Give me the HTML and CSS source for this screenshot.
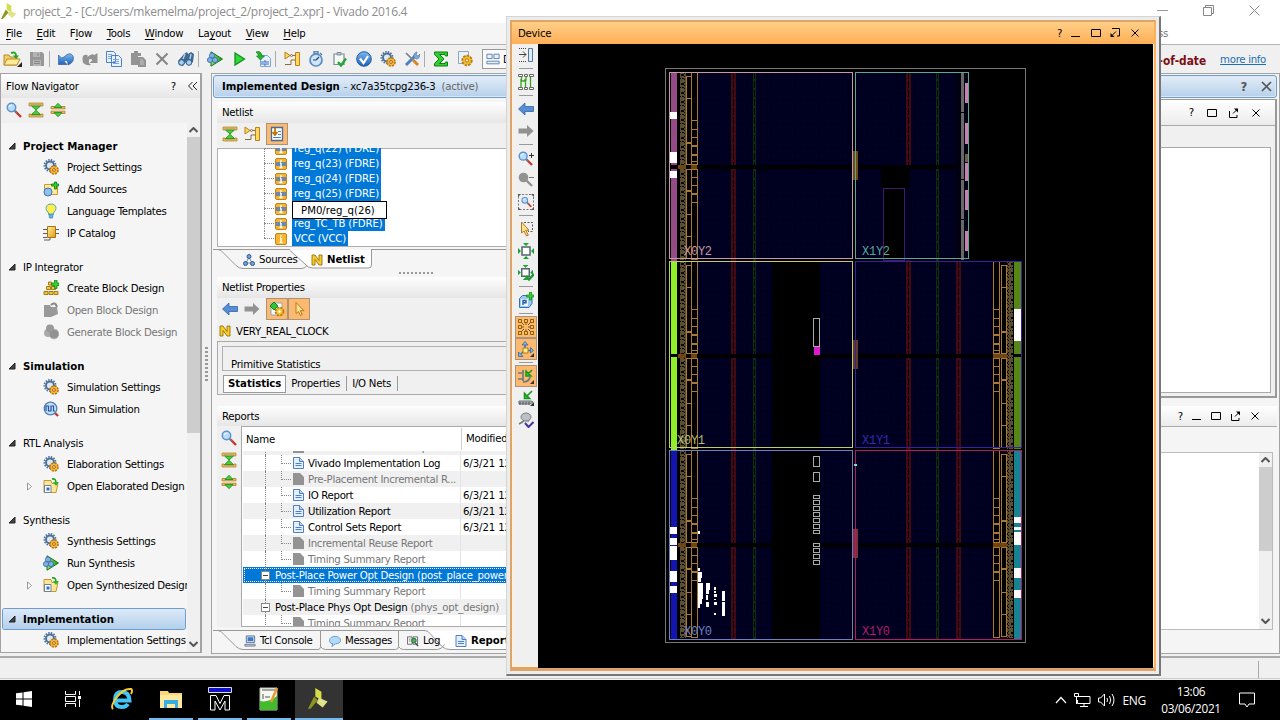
FILE: index.html
```html
<!DOCTYPE html>
<html lang="en">
<head>
<meta charset="utf-8">
<title>project_2 - Vivado 2016.4</title>
<link rel="stylesheet" href="styles.css">
</head>
<body>
<svg class="defs" width="0" height="0">
<defs>
<linearGradient id="gold" x1="0" y1="0" x2="1" y2="1"><stop offset="0" stop-color="#fff0a0"/><stop offset="1" stop-color="#e09a10"/></linearGradient>
<linearGradient id="blu" x1="0" y1="0" x2="0" y2="1"><stop offset="0" stop-color="#7db8ee"/><stop offset="1" stop-color="#1c5fb8"/></linearGradient>
<linearGradient id="grn" x1="0" y1="0" x2="1" y2="0"><stop offset="0" stop-color="#8ee36a"/><stop offset="1" stop-color="#12a012"/></linearGradient>
<symbol id="gears" viewBox="0 0 16 16"><circle cx="7" cy="6.500" r="5.700" fill="none" stroke="#4d6f95" stroke-width="1.600" stroke-dasharray="1.500 1.200"/><circle cx="7" cy="6.500" r="4" fill="#dce8f4" stroke="#4d6f95" stroke-width="1.900"/><circle cx="11" cy="11" r="4.100" fill="#f5b73a" stroke="#b87414" stroke-width="1.500" stroke-dasharray="2.200 1"/><circle cx="11" cy="11" r="1.400" fill="#fff4c8" stroke="#a8620a"/></symbol>
<symbol id="mag" viewBox="0 0 16 16"><path d="M9 9l6 6" stroke="#c8372e" stroke-width="2.400"/><path d="M8 8l3 3" stroke="#707a86" stroke-width="1.500"/><circle cx="5.500" cy="5.500" r="4.200" fill="#b9dcfa" stroke="#5c92ca" stroke-width="1.500"/><path d="M3 5q1-2 3-2" stroke="#fff" fill="none"/></symbol>
<symbol id="collapse" viewBox="0 0 16 16"><path d="M1 4V1h14v3h-2V3H3v1zM1 12v3h14v-3h-2v1H3v-1z" fill="#e9bd62" stroke="#b07c24" stroke-width=".7"/><path d="M3.500 4h9L8 8zM3.500 12.500h9L8 8.300z" fill="#4ecb36" stroke="#178a18" stroke-width=".8"/></symbol>
<symbol id="expand" viewBox="0 0 16 16"><path d="M1 6.800V4.500h14v2.300zM1 11.500V9.200h14v2.300z" fill="#e9bd62" stroke="#b07c24" stroke-width=".8"/><path d="M4 5.500h8L8 1.300zM4 10.500h8L8 14.700z" fill="#4ecb36" stroke="#178a18" stroke-width=".8"/></symbol>
<symbol id="addsrc" viewBox="0 0 16 16"><path d="M1.500 3.500h13v10h-13z" fill="#ffe9a0" stroke="#cc9a2c"/><circle cx="5" cy="11" r="4" fill="#92c1ee" stroke="#3a77b6"/><path d="M10 2h3v-2h2v2h2v2h-2v3h-2V4h-3z" transform="translate(-1.500 1)" fill="#38d038" stroke="#0b8a0b" stroke-width=".9"/></symbol>
<symbol id="bulb" viewBox="0 0 16 16"><path d="M8 1c-6 0-6 6-3 8l1 3h4l1-3c3-2 3-8-3-8z" fill="#ffee48" stroke="#52a5c8"/><path d="M6 11h4l-.5 4h-3z" fill="#6cb4e0" stroke="#2c7fae" stroke-width=".7"/></symbol>
<symbol id="ip" viewBox="0 0 16 16"><path d="M0 4.500h4M0 8.500h4M0 12.500h4M12 4.500h4M12 8.500h4M1 15h6v-2" stroke="#555e70" fill="none"/><path d="M4.500 1.500h8v11h-8z" fill="url(#gold)" stroke="#a9740c"/></symbol>
<symbol id="blocks" viewBox="0 0 16 16"><path d="M1 11.500h4v3H1zM6 11.500h4v3H6zM11 11.500h4v3h-4zM3.500 6.500h4v3h-4zM8.500 6.500h4v3h-4zM5.500 2h3v3h-3z" fill="#f2c63e" stroke="#a87a14"/><path d="M8.500 3h3V0h2.500v3h2v2.500h-2v3h-2.500v-3h-3z" fill="#38d038" stroke="#0b8a0b" stroke-width=".8"/></symbol>
<symbol id="openg" viewBox="0 0 16 16"><path d="M1 3h6l1 2h6l1 7-7 3H1z" fill="#999"/><path d="M8 3q4-4 6 2" stroke="#888" stroke-width="2" fill="none"/></symbol>
<symbol id="geng" viewBox="0 0 16 16"><circle cx="5" cy="9" r="4" fill="#aaa"/><circle cx="7" cy="4.500" r="4" fill="#999"/><circle cx="11" cy="10" r="4.800" fill="#929292" stroke="#aaa" stroke-width="1" stroke-dasharray="2 1"/></symbol>
<symbol id="sim" viewBox="0 0 16 16"><path d="M11 11l4 4" stroke="#c8372e" stroke-width="2.400"/><circle cx="7.500" cy="7.500" r="6.300" fill="#c5e0f8" stroke="#4f80b4" stroke-width="1.300"/><path d="M3 10V5h2.500v5H8V5h2.500v5H12" stroke="#2451a2" fill="none" stroke-width="1.200"/></symbol>
<symbol id="opend" viewBox="0 0 16 16"><path d="M1 2.500h7l1 3h6l-2 9H1z" fill="#ffe697" stroke="#c39734"/><path d="M1.500 7.500h6.500v7H1.500z" fill="#fff" stroke="#6682a5"/><path d="M3.500 9.500h3v3h-3z" fill="#386ac0"/><path d="M9 1q4-1 4 4" stroke="#18a118" stroke-width="1.600" fill="none"/><path d="M10 4h5.800L13 8z" fill="#28b728"/></symbol>
<symbol id="runs" viewBox="0 0 16 16"><path d="M4 .8L15.500 8 4 15.200z" fill="url(#grn)" stroke="#18761e"/><circle cx="5" cy="4.500" r="2.600" fill="#7fb0e4" stroke="#346aa6" stroke-width=".8"/><circle cx="3" cy="9" r="2.600" fill="#7fb0e4" stroke="#346aa6" stroke-width=".8"/><circle cx="8" cy="9" r="2.600" fill="#7fb0e4" stroke="#346aa6" stroke-width=".8"/></symbol>
<symbol id="play" viewBox="0 0 16 16"><path d="M4 2l9.500 6L4 14z" fill="#30d83a" stroke="#0d9318" stroke-width="1.300"/></symbol>
<symbol id="folder" viewBox="0 0 20 16"><path d="M1 14V4h5l1 2h7v8z" fill="#f4ce68" stroke="#b78c2a"/><path d="M1 14l3-6h13l-3 6z" fill="#ffe998" stroke="#b78c2a"/><path d="M8 2q5-2 5 3" stroke="#22a824" stroke-width="2" fill="none"/><path d="M10 4.500h6L13 8z" fill="#22a824"/><path d="M19 11v5h-5z" fill="#222"/></symbol>
<symbol id="save" viewBox="0 0 16 16"><path d="M1 1h12l2 2v12H1z" fill="#979797"/><path d="M4 1h7v5H4zM4 9h8v6H4z" fill="#b4b4b4"/><path d="M5 10.500h6M5 12.500h6M9 2v3" stroke="#888"/></symbol>
<symbol id="undo" viewBox="0 0 16 16"><path d="M.5 4v9.500H9L6.200 10.500Q10 7 10 14q7-3 5-9-3-5-9 1L3.500 7z" fill="url(#blu)" stroke="#2a5f9f" stroke-width=".7"/></symbol>
<symbol id="redo" viewBox="0 0 16 16"><path d="M15.500 2v10H7.500L10.500 9Q6 6 7 12l2 2q-9 1-8.500-6 0-5 5-4v2q4-4 7-2z" fill="#929292"/></symbol>
<symbol id="copy" viewBox="0 0 16 16"><path d="M.5.500h7l2 2v9h-9zM5.500 4.500h7l3 3v8h-10z" fill="#e8f3ff" stroke="#4d7fca"/><path d="M2 3.500h4M2 5.500h3M2 7.500h3M7 8.500h6M7 10.500h6M7 12.500h6" stroke="#79a5df"/></symbol>
<symbol id="paste" viewBox="0 0 16 16"><path d="M1 2h3V0h4v2h3v3H8v9H1zM8 6h5l3 3v7H8z" fill="#949494"/><path d="M10 9h3M10 11h4M10 13h4" stroke="#c4c4c4"/></symbol>
<symbol id="del" viewBox="0 0 16 16"><path d="M2.500 2.500l11 11M13.500 2.500l-11 11" stroke="#858585" stroke-width="2"/></symbol>
<symbol id="bino" viewBox="0 0 16 16"><path d="M6 3l3-2 1 2 3-2 3 2-1 8-4 3-3-3-3 4-4-1-1-4z" fill="#3f6790"/><circle cx="3.500" cy="11.500" r="2.800" fill="#a8d0f0" stroke="#315b88"/><circle cx="11" cy="11.500" r="2.800" fill="#a8d0f0" stroke="#315b88"/><path d="M7 3l-2 5M13 3l-1 5" stroke="#b8d0e6" stroke-width="1.400"/></symbol>
<symbol id="bits" viewBox="0 0 16 16"><path d="M5.500 4.500h7l3 3v8h-10z" fill="#e7f2fe" stroke="#7da5d4"/><path d="M7 10v4M9 10h2v4H9zM13 10v4" stroke="#3a6abd" fill="none"/><path d="M1 1q5-2 6 4h2.500L5.500 9 1.500 5h2q0-2-2.500-4z" fill="#22b62b" stroke="#107d18" stroke-width=".7"/></symbol>
<symbol id="schem" viewBox="0 0 16 16"><path d="M1 1l5 3.500L1 8zM11.500 1.500h4v13h-4z" fill="#ffd75e" stroke="#b7821c"/><path d="M6 4.500h5M1 13.500h6V9h4" stroke="#8a6a3a" fill="none"/><circle cx="7.500" cy="4.500" r="1" fill="#fff" stroke="#8a6a3a"/></symbol>
<symbol id="timer" viewBox="0 0 16 16"><path d="M6 0h4v3H6zM12 2l2 2" stroke="#557ca6" stroke-width="1.300" fill="#a9c5e4"/><circle cx="8" cy="9" r="6" fill="#cfe5fb" stroke="#5a8ac0" stroke-width="1.700"/><path d="M8 9l3-3M8 9H5" stroke="#26486e" stroke-width="1.200"/></symbol>
<symbol id="clip" viewBox="0 0 16 16"><path d="M2 3h10v10.500H2z" fill="#f4f9f4" stroke="#7d8d94" stroke-width="1.200"/><path d="M5 1.500h4v2.500H5z" fill="#bac9d4" stroke="#7d8d94"/><path d="M6 11l3 3.500 5-7" stroke="#20a635" stroke-width="2.400" fill="none"/></symbol>
<symbol id="okc" viewBox="0 0 16 16"><circle cx="8" cy="8" r="7.300" fill="url(#blu)" stroke="#205da8"/><path d="M4 7.500L7.500 12 12 5" stroke="#fff" stroke-width="2.200" fill="none"/></symbol>
<symbol id="tools" viewBox="0 0 16 16"><path d="M2 14l9-9" stroke="#4b82bd" stroke-width="3"/><path d="M10 6q-1-4 3-5l-1 3 2 1 2-2q0 5-4 5z" fill="#7facdd" stroke="#3a6ca8" stroke-width=".6"/><path d="M2 2l7 7" stroke="#75828f" stroke-width="1.700"/><path d="M9 9l5 5" stroke="#d8842c" stroke-width="3"/></symbol>
<symbol id="sigma" viewBox="0 0 16 16"><path d="M1.500 1h13v4h-2L12 3.500H6.500L11 8l-4.500 4.500H12l.5-1.500h2v4h-13v-2.500L6 8 1.500 3.500z" fill="#2fd02f" stroke="#0c7e12"/></symbol>
<symbol id="fgear" viewBox="0 0 16 16"><path d="M1.500.500h10v12h-10z" fill="#eaf2fb" stroke="#91a5bd"/><circle cx="10" cy="9.500" r="4.800" fill="#f5bd32" stroke="#bb7c12" stroke-width="1.800" stroke-dasharray="2.600 1"/><circle cx="10" cy="9.500" r="1.700" fill="#fff2b8" stroke="#b3740d"/></symbol>
<symbol id="layout" viewBox="0 0 16 16"><path d="M1 2.500h6v5H1zM9 2.500h6v5H9zM1 10.500h14v3H1z" fill="#e8f1fb" stroke="#5479ab"/></symbol>
<symbol id="netlistbtn" viewBox="0 0 16 16"><path d="M2.500 1.500h11v13h-11z" fill="#fff" stroke="#426da4" stroke-width="1.300"/><path d="M9 5.500h3M9 8.500h3M4 11.500h8" stroke="#4b80bf"/><path d="M6 2v6M3.500 6L6 9l2.500-3" stroke="#bc7600" stroke-width="1.800" fill="none"/></symbol>
<symbol id="cell" viewBox="0 0 12 12"><rect x=".5" y=".5" width="11" height="11" rx="1.500" fill="#f8b62f" stroke="#c3811a"/><path d="M1 4h10v4H1z" fill="#6d87ab"/><path d="M6 2v2M6 5v4.500M4.500 9.500h3M5 5h1" stroke="#fff" stroke-width="1.400"/></symbol>
<symbol id="celli" viewBox="0 0 12 12"><rect x=".5" y=".5" width="11" height="11" rx="1.500" fill="#f8b62f" stroke="#c3811a"/><path d="M6 2v1.500M6 5v4.500M4.500 9.500h3M5 5h1" stroke="#fff" stroke-width="1.400"/></symbol>
<symbol id="src" viewBox="0 0 12 12"><path d="M6 3L3 9h6z" fill="none" stroke="#888"/><circle cx="6" cy="2.500" r="2" fill="#6ba3df" stroke="#285b98"/><circle cx="2.500" cy="9.500" r="2" fill="#6ba3df" stroke="#285b98"/><circle cx="9.500" cy="9.500" r="2" fill="#6ba3df" stroke="#285b98"/></symbol>
<symbol id="nn" viewBox="0 0 12 12"><path d="M1 11V1h3l4 5.500V1h3v10H8L4 5.500V11z" fill="#f4ca2c" stroke="#98720c" stroke-width=".9"/></symbol>
<symbol id="larr" viewBox="0 0 16 16"><path d="M.5 8L7 2v3.500h8.500v5H7V14z" fill="#568ed4" stroke="#3464a4" stroke-width=".8"/></symbol>
<symbol id="rarr" viewBox="0 0 16 16"><path d="M15.500 8L9 2v3.500H.5v5H9V14z" fill="#929292"/></symbol>
<symbol id="pgear" viewBox="0 0 16 16"><path d="M2 2h11v12H2z" fill="#f7fbff" stroke="#91a5bd"/><path d="M1 5l4-4 4 4-4 4z" fill="#2dc43a" stroke="#118421"/><circle cx="10.500" cy="10.500" r="4" fill="#f5c332" stroke="#b97c12" stroke-width="1.700" stroke-dasharray="2.200 1"/><circle cx="10.500" cy="10.500" r="1.200" fill="#fff"/></symbol>
<symbol id="cur" viewBox="0 0 16 16"><path d="M5 1.500v11l2.500-2 2 4 1.800-.8-2-4H13z" fill="#ffe08a" stroke="#b27a22"/></symbol>
<symbol id="doc" viewBox="0 0 11 12"><path d="M.5.500h6l4 4v7H.5z" fill="#e4f0fd" stroke="#4f7fc4"/><path d="M6.500.500v4h4" fill="#b6d2f1" stroke="#4f7fc4"/><path d="M2.500 6.500h6M2.500 8.500h6" stroke="#4f7fc4"/></symbol>
<symbol id="docg" viewBox="0 0 11 12"><path d="M0 0h7l4 4v8H0z" fill="#939393"/></symbol>
<symbol id="con" viewBox="0 0 13 12"><path d="M2.500.500h9v7h-9z" fill="#c7dff6" stroke="#5b7190"/><path d="M4 2h6v4H4z" fill="#3d78c4"/><path d="M1 9.500h11v2H1z" fill="#d5dbe3" stroke="#65758a"/></symbol>
<symbol id="msg" viewBox="0 0 13 12"><path d="M6.500 1C-1 1-1 9 4 9l-1 3 4-3c8 0 7-8-.5-8z" fill="#b2d8fa" stroke="#6096cd"/></symbol>
<symbol id="log" viewBox="0 0 13 12"><path d="M.5 1.500h5v8h-5zM6.500 1.500h5v8h-5z" fill="#f3f6fa" stroke="#5c6a7a"/><path d="M2 4h2M2 6h2M8 4h2" stroke="#d46a55"/><circle cx="7.500" cy="5.500" r="2.500" fill="#4ab05b" stroke="#276b34"/><path d="M9 8l3 3.500" stroke="#444" stroke-width="1.500"/></symbol>
<symbol id="dock" viewBox="0 0 16 16"><path d="M1 1.500h8M1 14.500h8" stroke="#444" stroke-dasharray="1 1"/><path d="M1 7.500h7M5 4.500l3 3-3 3" stroke="#444" fill="none"/><path d="M10.500 1.500h4v13h-4z" fill="#dcecfb" stroke="#54779c"/></symbol>
<symbol id="route" viewBox="0 0 16 16"><path d="M3.500 3v4h4v7M3 5v8M8 3v3h-2M12.500 3v11" stroke="#35a51c" stroke-width="1.300" fill="none"/><path d="M.5.500h4v2h-4zM6.500.500h3v2h-3zM11.500.500h4v2h-4zM.5 13.500h4v2h-4zM6.500 13.500h3v2h-3zM11.500 13.500h4v2h-4z" fill="#fff" stroke="#666"/></symbol>
<symbol id="zin" viewBox="0 0 16 16"><use href="#mag" width="15" height="15" y="1"/><path d="M13.500 3v5M11 5.500h5" stroke="#333"/></symbol>
<symbol id="zout" viewBox="0 0 16 16"><path d="M8 8l6 6" stroke="#929292" stroke-width="2.400"/><circle cx="5.500" cy="5.500" r="4.800" fill="#929292"/><path d="M11 5.500h5" stroke="#777"/></symbol>
<symbol id="zfit" viewBox="0 0 16 16"><path d="M.5.500h15v15H.5z" fill="none" stroke="#777" stroke-dasharray="2 1.500"/><path d="M0 0h3L0 3zM16 0h-3l3 3zM0 16h3l-3-3zM16 16h-3l3-3z" fill="#555"/><use href="#mag" x="3" y="2.500" width="11" height="11"/></symbol>
<symbol id="selarea" viewBox="0 0 16 16"><path d="M6 1.500h8.500v9H10" fill="none" stroke="#555" stroke-dasharray="2 1.500"/><path d="M3.500 1v11l2.500-2 2.500 5 1.800-.8-2.500-5H11z" fill="#ffe08a" stroke="#b27a22"/></symbol>
<symbol id="fit" viewBox="0 0 16 16"><path d="M4 4h8v8H4z" fill="#fff" stroke="#51636c" stroke-width="1.500"/><path d="M5 0h6L8 3zM5 16h6l-3-3zM0 5v6l3-3zM16 5v6l-3-3z" fill="#12a72f"/></symbol>
<symbol id="fitc" viewBox="0 0 16 16"><use href="#fit" width="15" height="15"/><path d="M8 11l3 3.500 5-5.500" stroke="#179933" stroke-width="2.300" fill="none"/></symbol>
<symbol id="pb" viewBox="0 0 16 16"><path d="M1.500 6.500l3-3H14v8l-3 4H1.500z" fill="#9ccaf1" stroke="#396fae"/><path d="M3 7h7v7H3z" fill="#edf6ff"/><path d="M5 13V8.500h3v2.300H5" stroke="#245ba4" stroke-width="1.400" fill="none"/><path d="M8.500 3h3V0h2v3H16v2h-2.500v3h-2V5h-3z" fill="#38d038" stroke="#0b8a0b" stroke-width=".7"/></symbol>
<symbol id="mesh" viewBox="0 0 16 16"><path d="M3 3l10 10M13 3L3 13M8 2v12M2 8h12" stroke="#715834"/><path d="M.5.500h3v3h-3zM6.500.500h3v3h-3zM12.500.500h3v3h-3zM.5 6.500h3v3h-3zM12.500 6.500h3v3h-3zM.5 12.500h3v3h-3zM6.500 12.500h3v3h-3zM12.500 12.500h3v3h-3z" fill="#f9c33c" stroke="#8d5c10"/><path d="M6 6h4v4H6z" fill="#ffb85c"/></symbol>
<symbol id="move" viewBox="0 0 16 16"><path d="M7 8V3M9 9.500h4M6 10l-3 3" stroke="#3974bd" stroke-width="1.500"/><path d="M4 4L7 .5 10 4zM12.500 6.500L15.500 9.500 12.500 12zM.5 11v4.500H5z" fill="#7bb3ee" stroke="#285b98" stroke-width=".7"/><path d="M5 7h5v5H5z" fill="#ffec8b" stroke="#ab7b14"/><path d="M16 12v4h-4z" fill="#333"/></symbol>
<symbol id="gate" viewBox="0 0 16 16"><path d="M0 5h5M0 11h5M5 2v11M5 14q6 0 7-5" stroke="#70787e" stroke-width="1.700" fill="none"/><path d="M14 2l-4 4M8 3v5h5z" stroke="#13991b" stroke-width="1.500" fill="#40d32c"/><path d="M16 12v4h-4z" fill="#333"/></symbol>
<symbol id="chip" viewBox="0 0 16 16"><path d="M1 11h12l2 1-3 2H1z" fill="#a8adb0" stroke="#6b757c"/><path d="M2 12v3M5 12v3M8 12v3M11 12v3" stroke="#555"/><path d="M14 1L9 6M6.500 3.500v5h5z" stroke="#13991b" stroke-width="1.600" fill="#40d32c"/><path d="M16 12v4h-4z" fill="#333"/></symbol>
<symbol id="pin" viewBox="0 0 16 16"><path d="M6 9l-5 3" stroke="#777" stroke-width="1.500"/><path d="M5 7l1 2 5 1 1-4" fill="#9c9fa2"/><ellipse cx="8" cy="5" rx="5" ry="4" fill="#bcc0c4" stroke="#797e83"/><path d="M7 11l3.500 4L15.500 10" stroke="#4234a8" stroke-width="2" fill="none"/></symbol>
<symbol id="wmin" viewBox="0 0 12 12"><path d="M1 9.500h9" stroke="currentColor"/></symbol>
<symbol id="wmax" viewBox="0 0 12 12"><path d="M1.500 2.500h9v7h-9z" stroke="currentColor" fill="none"/></symbol>
<symbol id="wpop" viewBox="0 0 12 12"><path d="M1.500 4v6.500H9V8M5 6.500l4-4" stroke="currentColor" fill="none"/><path d="M6 1.500h4v4z"/></symbol>
<symbol id="wdock" viewBox="0 0 12 12"><path d="M3 1.500h7.500V9H8M7 4.500L3.500 8" stroke="currentColor" fill="none"/><path d="M1.500 6v4h4z"/></symbol>
<symbol id="wx" viewBox="0 0 12 12"><path d="M2.500 2.500l7 7M9.500 2.500l-7 7" stroke="currentColor" fill="none"/></symbol>
<symbol id="logo" viewBox="0 0 18 18"><path d="M6 0l5 3v7l-5-3z" fill="#d5dc4a"/><path d="M5 7l3 3-6 7H0z" fill="#8f9620"/><path d="M9 8l7 3-4 5-5-4z" fill="#e1e38b"/></symbol>
</defs>
</svg>

<header class="titlebar">
  <svg class="applogo"><use href="#logo"/></svg>
  <span class="apptitle">project_2 - [C:/Users/mkemelma/project_2/project_2.xpr] - Vivado 2016.4</span>
  <span class="winctl">
    <svg width="11" height="11"><path d="M0 5.500h11" stroke="#999"/></svg>
    <svg width="11" height="11"><path d="M.5 2.500h8v8h-8zM2.500 2V.500h8v8H9" stroke="#888" fill="none"/></svg>
    <svg width="11" height="11"><path d="M.5.500l10 10M10.500.500l-10 10" stroke="#888"/></svg>
  </span>
</header>
<nav class="menubar">
  <span><u>F</u>ile</span><span><u>E</u>dit</span><span>F<u>l</u>ow</span><span><u>T</u>ools</span><span><u>W</u>indow</span><span>La<u>y</u>out</span><span><u>V</u>iew</span><span><u>H</u>elp</span>
  <span class="quick">ss</span>
</nav>
<div class="toolbar">
  <b class="wide"><svg><use href="#folder"/></svg></b><b><svg><use href="#save"/></svg></b><i></i>
  <b><svg><use href="#undo"/></svg></b><b><svg><use href="#redo"/></svg></b><b><svg><use href="#copy"/></svg></b><b><svg><use href="#paste"/></svg></b><b><svg><use href="#del"/></svg></b><b><svg><use href="#bino"/></svg></b><i></i>
  <b><svg><use href="#runs"/></svg></b><b><svg><use href="#play"/></svg></b><b><svg><use href="#bits"/></svg></b><i></i>
  <b><svg><use href="#schem"/></svg></b><b><svg><use href="#timer"/></svg></b><b><svg><use href="#clip"/></svg></b><b><svg><use href="#okc"/></svg></b><b><svg><use href="#gears"/></svg></b><b><svg><use href="#tools"/></svg></b><i></i>
  <b><svg><use href="#sigma"/></svg></b><b><svg><use href="#fgear"/></svg></b>
  <span class="combo"><svg><use href="#layout"/></svg>D</span>
  <span class="ood">-of-date</span><span class="more">more info</span>
</div>

<main class="work">
  <aside class="flow">
    <div class="phead flowhead"><span>Flow Navigator</span><span class="q">?</span><svg width="10" height="10"><path d="M4.500 1l-4 4 4 4M9 1L5 5l4 4" stroke="#222" fill="none"/></svg></div>
    <div class="ptools fl"><svg><use href="#mag"/></svg><svg><use href="#collapse"/></svg><svg><use href="#expand"/></svg></div>
    <div class="flowbody">
      <div class="tree" id="flowtree"></div>
      <div class="sbar"><svg width="9" height="6"><path d="M.5 5l4-4 4 4" stroke="#555" stroke-width="2" fill="none"/></svg><div class="thumb"></div><svg width="9" height="6"><path d="M.5 1l4 4 4-4" stroke="#555" stroke-width="2" fill="none"/></svg></div>
    </div>
  </aside>
  <div class="vgrip"><i></i></div>
  <section class="design">
    <div class="dtitle"><strong>Implemented Design</strong><span class="mid"><em>-</em> xc7a35tcpg236-3</span><em>(active)</em><span class="dctl"><b>?</b><svg width="11" height="11"><path d="M1 1l9 9M10 1l-9 9" stroke="#555" stroke-width="1.700"/></svg></span></div>
    <div class="dcols">
      <div class="leftcol">
        <div class="phead">Netlist</div>
        <div class="ptools nt"><svg><use href="#collapse"/></svg><svg><use href="#schem"/></svg><span class="on"><svg><use href="#netlistbtn"/></svg></span></div>
        <div class="netbox">
          <div class="nrow"><svg><use href="#cell"/></svg><span>reg_q(22) (FDRE)</span></div>
          <div class="nrow"><svg><use href="#cell"/></svg><span>reg_q(23) (FDRE)</span></div>
          <div class="nrow"><svg><use href="#cell"/></svg><span>reg_q(24) (FDRE)</span></div>
          <div class="nrow"><svg><use href="#cell"/></svg><span>reg_q(25) (FDRE)</span></div>
          <div class="nrow"><svg><use href="#cell"/></svg><div class="tip">PM0/reg_q(26)</div></div>
          <div class="nrow"><svg><use href="#cell"/></svg><span>reg_TC_TB (FDRE)</span></div>
          <div class="nrow last"><svg><use href="#celli"/></svg><span>VCC (VCC)</span></div>
        </div>
        <div class="tabs top">
          <svg class="tabline" width="300" height="22"><path d="M158.500 1v15q0 3-3 3H99q-4 0-7-4L77 1.500" fill="#fff" stroke="#999"/><path d="M0 .500h5q3 0 6 4l12 12q3 3 7 3h59q3 0 5-3M158 .500h142M5 .500h72" fill="none" stroke="#999"/></svg>
          <span class="tab t1"><svg><use href="#src"/></svg>Sources</span><span class="tab t2"><svg><use href="#nn"/></svg><strong>Netlist</strong></span>
        </div>
        <div class="hgrip"><i></i></div>
        <div class="phead">Netlist Properties</div>
        <div class="ptools np"><svg><use href="#larr"/></svg><svg><use href="#rarr"/></svg><span class="on"><svg><use href="#pgear"/></svg></span><span class="on"><svg><use href="#cur"/></svg></span></div>
        <div class="clk"><svg><use href="#nn"/></svg>VERY_REAL_CLOCK</div>
        <div class="statbox">
          <div class="prim">Primitive Statistics</div>
          <div class="stabs"><strong>Statistics</strong><span>Properties</span><span>I/O Nets</span></div>
        </div>
        <div class="phead rephead">Reports</div>
        <div class="reports">
          <div class="rtools"><svg><use href="#mag"/></svg><svg><use href="#collapse"/></svg><svg><use href="#expand"/></svg></div>
          <div class="rtable">
            <div class="rh"><span>Name</span><span class="mod">Modified</span></div>
            <div class="rrows" id="rrows"></div>
          </div>
        </div>
        <div class="tabs bot">
          <svg class="tabline" width="300" height="22"><path d="M212 .500q3 0 6 4l11 12q3 3 8 3h63V.500" fill="#fff" stroke="#999"/><path d="M0 .500h5q3 0 6 4l12 12q3 3 7 3h75q2.500 0 2.500-3V.500v16q2 3 5 3h70q3 0 3-3V.500v16q2 3 5 3h34q4 0 7-5M5 .500h207" fill="none" stroke="#999"/></svg>
          <span class="tab b1"><svg><use href="#con"/></svg>Tcl Console</span><span class="tab b2"><svg><use href="#msg"/></svg>Messages</span><span class="tab b3"><svg><use href="#log"/></svg>Log</span><span class="tab b4"><svg><use href="#doc"/></svg><strong>Reports</strong></span>
        </div>
      </div>
      <div class="rightcol">
        <div class="rp1">
          <div class="rhd"><b>?</b><svg><use href="#wmax"/></svg><svg><use href="#wpop"/></svg><svg><use href="#wx"/></svg></div>
          <div class="rbox"></div>
        </div>
        <div class="rp2">
          <div class="rhd"><b>?</b><svg><use href="#wmin"/></svg><svg><use href="#wmax"/></svg><svg><use href="#wpop"/></svg><svg><use href="#wx"/></svg></div>
          <div class="rlist"><div class="sbar"><svg width="9" height="6"><path d="M.5 5l4-4 4 4" stroke="#555" stroke-width="2" fill="none"/></svg><div class="thumb"></div><svg width="9" height="6"><path d="M.5 1l4 4 4-4" stroke="#555" stroke-width="2" fill="none"/></svg></div></div>
        </div>
      </div>
    </div>
  </section>
</main>
<div class="status"><i></i></div>

<footer class="taskbar">
  <span class="tb"><svg width="16" height="16"><path d="M0 2.300L6.500 1.400v6.100H0zM7.500 1.200L16 0v7.500H7.500zM0 8.500h6.500v6.100L0 13.700zM7.500 8.500H16V16l-8.500-1.200z" fill="#fff"/></svg></span>
  <span class="tb"><svg width="17" height="16"><path d="M.5 0v3.500h10V0M.5 5.500h10v5H.5zM.5 16v-3.500h10V16M14.500 0v4M14.500 8.500V16" stroke="#fff" fill="none"/><path d="M13 5h3v3h-3z" fill="#fff"/></svg></span>
  <span class="tb"><svg width="22" height="24"><path d="M3 13.500h15.500Q18 5 11 5T4 12.500 11 20q4 0 6-3" stroke="#45c5f5" stroke-width="4" fill="none"/><path d="M2 22Q-1 19 6 10T20 2q2 1 0 5" stroke="#f8cd2d" stroke-width="2" fill="none"/></svg></span>
  <span class="tb run"><svg width="22" height="19"><path d="M0 1h8l1 2h13v15H0z" fill="#f8d775"/><path d="M0 5h22v13H0z" fill="#ffe8a0"/><path d="M4 18v-8h14v8h-3v-4H7v4z" fill="#37aede"/></svg></span>
  <span class="tb run"><svg width="24" height="24"><path d="M.5.500h23v5H.5z" fill="#1010c8" stroke="#ddd"/><path d="M2.500 23V8.500H8l4 8 4-8h5.500V23H17v-9l-5 9-5-9v9z" fill="#000" stroke="#fff"/></svg></span>
  <span class="tb run"><svg width="20" height="24"><path d="M1 1h17v22H1z" fill="#f4f8f0" stroke="#b8c4b0"/><path d="M1 14q8 2 17-5v14H1z" fill="#46ba2e"/><path d="M4 7v5M6 10h5M3 3h13" stroke="#555"/><path d="M18 1l-6 14" stroke="#e69b34" stroke-width="2.500"/></svg></span>
  <span class="tb run act"><svg width="22" height="22"><use href="#logo"/></svg></span>
  <span class="tray">
    <svg width="12" height="8"><path d="M1 7l5-5.500L11 7" stroke="#fff" stroke-width="1.200" fill="none"/></svg>
    <svg width="17" height="15"><path d="M4 3.500h12v7H3.500V7M10 10.500v3M6 13.500h8M.5.500h4v3h-4zM2.500 4v7" stroke="#fff" fill="none"/></svg>
    <svg width="17" height="14"><path d="M.5 5v4h2l4 4V1l-4 4zM9 5q1 2 0 4M11.500 3q2.500 4 0 8M14 1q4 6 0 12" stroke="#fff" fill="none"/></svg>
    <span class="eng">ENG</span>
    <span class="clock"><span>13:06</span><span>03/06/2021</span></span>
    <svg width="16" height="16"><path d="M.5 1h15v11H10l-2 3-2-3H.500z" stroke="#fff" fill="none"/></svg>
  </span>
</footer>

<section class="device">
  <div class="dframe">
    <div class="dhead"><span>Device</span><span class="dicons"><b>?</b><svg><use href="#wmin"/></svg><svg><use href="#wmax"/></svg><svg><use href="#wdock"/></svg><svg><use href="#wx"/></svg></span></div>
    <div class="dbody">
      <div class="dtools">
        <b><svg><use href="#dock"/></svg></b><i></i><b><svg><use href="#route"/></svg></b><i></i><b><svg><use href="#larr"/></svg></b><b><svg><use href="#rarr"/></svg></b><i></i><b><svg><use href="#zin"/></svg></b><b><svg><use href="#zout"/></svg></b><b><svg><use href="#zfit"/></svg></b><i></i><b><svg><use href="#selarea"/></svg></b><b><svg><use href="#fit"/></svg></b><b><svg><use href="#fitc"/></svg></b><i></i><b><svg><use href="#pb"/></svg></b><i></i><b class="on"><svg><use href="#mesh"/></svg></b><b class="on"><svg><use href="#move"/></svg></b><i></i><b class="on"><svg><use href="#gate"/></svg></b><b><svg><use href="#chip"/></svg></b><b><svg><use href="#pin"/></svg></b>
      </div>
      <svg class="fabric" id="fabric" viewBox="538 44 615 624" width="615" height="624"></svg>
    </div>
  </div>
</section>
<script src="app.js"></script>
</body>
</html>
```
FILE: styles.css
```css
*{box-sizing:border-box}
body{margin:0;width:1280px;height:720px;position:relative;overflow:hidden;display:flex;flex-direction:column;background:#f0f0f0;font:11.3px "DejaVu Sans Condensed","DejaVu Sans",sans-serif;font-stretch:condensed;color:#000;letter-spacing:-.25px;white-space:nowrap}
svg{display:block;flex:none}
strong{letter-spacing:-.05px}
em{font-style:normal;color:#666}
.defs{position:absolute}
.titlebar{height:23px;flex:none;background:#fff;display:flex;align-items:center;position:relative}
.applogo{width:17px;height:17px;margin-left:1px}
.apptitle{margin-left:5px;font:12px "Open Sans",sans-serif;color:#8c8c8c;letter-spacing:-.29px}
.winctl{margin-left:auto;display:flex;gap:35px;margin-right:20px;margin-top:-3px}
.menubar{height:22px;flex:none;border-bottom:1px solid #b4b4b4;display:flex;align-items:center;padding-left:6px;gap:14.6px;background:linear-gradient(90deg,#f5f5f5 1100px,#fff 1100px)}
.menubar u{text-underline-offset:2px}
.quick{margin-left:auto;margin-right:112px;color:#777}
.toolbar{height:28px;flex:none;display:flex;align-items:center;padding-left:1px}
.toolbar b{width:24px;display:flex;justify-content:center;flex:none}
.toolbar b svg{width:16px;height:16px}
.toolbar b.wide svg{width:20px}
.toolbar i{width:5px;height:16px;flex:none;border-left:1px solid #aaa;margin:0}
.combo{margin-left:5px;width:400px;height:20px;border:1px solid #999;background:#fafafa;display:flex;align-items:center;gap:3px;padding-left:3px}
.combo svg{width:14px;height:14px}
.ood{margin-left:auto;font-weight:bold;color:#7a0f14;font-size:11.8px;width:46px;margin-top:3px;letter-spacing:0;display:flex;justify-content:flex-end}
.more{margin-left:14px;margin-right:14px;color:#1c70b0;text-decoration:underline;letter-spacing:-.3px}
.work{height:585px;flex:none;display:flex;border-bottom:2px solid #aaa;position:relative}
.flow{width:202px;height:580px;flex:none;border:1px solid #a3a3a3;background:#f0f0f0;display:flex;flex-direction:column;border-right-width:2px}
.phead{height:21px;flex:none;display:flex;align-items:center;padding-left:5px;background:linear-gradient(#fefefe,#e6e6e6)}
.flowhead{height:24px}
.flowhead .q{margin-left:auto;margin-right:12px}
.flowhead svg{margin-right:2px}
.ptools{height:25px;flex:none;display:flex;align-items:center;gap:6px;padding-left:5px}
.ptools svg{width:16px;height:16px}
.ptools.fl{padding-bottom:2px}
.flowbody{flex:1;display:flex;min-height:0}
.tree{width:186px;background:#f5f5f5;padding-top:13px;overflow:hidden;flex:none}
.group{margin-bottom:13px}
.gh{height:20px;display:flex;align-items:center;padding-left:22px;position:relative;margin-right:2px}
.gh svg{position:absolute;left:7px;top:6px}
.gh.b{font-weight:bold;letter-spacing:0}
.gh.sel{background:linear-gradient(#dce9f7,#b4d0ec);box-shadow:0 0 0 1px #6f9cce;border-radius:2px;margin-left:2px;padding-left:20px}
.gh.sel svg{left:5px}
.it{height:22px;display:flex;align-items:center;padding-left:26px;letter-spacing:-.3px}
.it .exp{width:16px;flex:none}
.it .ic{width:16px;height:16px;margin-right:8px}
.it.off{color:#777}
.sbar{width:13px;background:#f0f0f0;display:flex;flex-direction:column;align-items:center;padding:4px 0 5px}
.sbar .thumb{width:13px;background:#cdcdcd;height:296px;margin:4px 0 auto}
.vgrip{width:9px;flex:none;display:flex;align-items:center;justify-content:center}
.vgrip i{width:3px;height:35px;background:repeating-linear-gradient(#999 0 2px,transparent 2px 4px)}
.design{flex:1;height:581px;border:1px solid #a3a3a3;padding:1px 1px 0;display:flex;flex-direction:column;background:#f5f5f5}
.dtitle{height:23px;flex:none;margin-right:1px;border:1px solid #6f9cce;border-radius:3px;background:linear-gradient(#e3edf8,#b6d0ea);display:flex;align-items:center;padding-left:8px;box-shadow:inset 0 0 0 1px #dbe9f7}
.dtitle .mid{margin-left:4px}
.dtitle>em{margin-left:6px}
.dctl{margin-left:auto;display:flex;gap:14px;align-items:center;margin-right:4px;color:#555;font-size:13px}
.dcols{display:flex;flex:1;padding-top:3px;justify-content:space-between;min-height:0}
.leftcol{width:330px;margin-left:4px;display:flex;flex-direction:column;flex:none;padding-top:1px}
.leftcol .ptools{background:#f0f0f0}
.leftcol .nt{height:25px;padding-bottom:3px}
.on{width:22px;height:22px;display:flex;align-items:center;justify-content:center;background:#fcb96f;border:1px solid #a99478}
.netbox{height:99px;flex:none;border:1px solid #b0b0b0;background:#fff;clip-path:inset(0);padding-left:46px}
.nrow{height:15px;display:flex;align-items:center;padding-left:11px;position:relative;letter-spacing:-.15px}
.nrow::before{content:"";position:absolute;left:0;top:7px;width:10px;border-top:1px dotted #888}
.nrow::after{content:"";position:absolute;left:0;top:0;height:15px;border-left:1px dotted #888}
.nrow.last::after{height:7px}
.nrow:first-child{margin-top:-8px}
.nrow svg{width:12px;height:12px;margin-right:5px}
.nrow span{background:#0078d7;color:#fff;height:15px;line-height:15px;padding:0 2px}
.tip{position:absolute;left:28px;top:0;height:18px;width:95px;background:#fff;border:1px solid #000;z-index:2;line-height:17px;padding-left:8px;letter-spacing:0}
.tabs{position:relative;flex:none;height:24px;margin-left:-4px;margin-top:3px}
.tabs.top{margin-top:2px}
.tabline{position:absolute;left:0;top:0}
.tab{position:absolute;top:2px;height:17px;display:flex;align-items:center;gap:4px}
.tab svg{width:12px;height:12px}
.t1{left:30px}.t2{left:98px}
.hgrip{height:5px;margin-top:-1px;flex:none;padding-left:182px}
.hgrip i{display:block;width:35px;height:2px;background:repeating-linear-gradient(90deg,#999 0 2px,transparent 2px 4px)}
.leftcol .np{height:23px;padding-bottom:1px}
.np .on+.on{margin-left:-6px}
.clk{height:20px;flex:none;display:flex;align-items:center;gap:5px;padding-left:2px;background:#f0f0f0}
.clk svg{width:12px;height:12px}
.statbox{height:54px;flex:none;border:1px solid #aaa;background:#f0f0f0;padding:4px 0 0 4px;border-right:0}
.prim{height:25px;border:1px solid #b0b0b0;border-right:0;padding:11px 0 0 8px;line-height:13px}
.stabs{display:flex;align-items:center;height:24px;padding:1px 0 0 1px}
.stabs strong{height:18px;border:1px solid #999;background:#fff;padding:2px 4px;line-height:12px}
.stabs span{height:15px;line-height:15px;padding:0 6px 0 5px;border-right:1px solid #999}
.rephead{margin-top:11px;height:20px}
.reports{height:201px;flex:none;display:flex}
.rtools{width:24px;padding:4px 0 0 4px;display:flex;flex-direction:column;gap:6px;flex:none;background:#f0f0f0}
.rtools svg{width:16px;height:16px}
.rtable{flex:1;border:1px solid #aaa;background:#fff;display:flex;flex-direction:column;overflow:hidden;min-width:0}
.rh{height:24px;flex:none;display:flex;align-items:center;padding-left:4px}
.rh .mod{margin-left:188px;border-left:1px solid #ccc;height:22px;line-height:22px;padding-left:4px}
.rh span:first-child{width:27px}
.rrows{flex:1;margin-left:1px;overflow:hidden;min-height:0}
.rr{height:16px;display:flex;position:relative;align-items:center}
.rr:nth-child(odd){background:#f0f0f0}
.rr:first-child{margin-top:-12px}
.rr .nm{width:218px;flex:none;border-right:1px solid #e4e4e4;height:16px;display:flex;align-items:center;padding-left:50px;overflow:hidden;letter-spacing:-.3px}
.rr .nm svg{width:11px;height:12px;margin-right:4px}
.rr .dt{padding-left:2px;letter-spacing:-.1px}
.rr.off,.rr .g{color:#777}
.rr.st .nm{padding-left:32px;overflow:visible;border:0;letter-spacing:-.25px}
.rr .box{position:absolute;left:18px;top:4px;width:9px;height:9px;border:1px solid #888;background:linear-gradient(#444,#444) center/5px 1px no-repeat #fff;z-index:1}
.rr::before{content:"";position:absolute;left:22px;top:0;height:16px;border-left:1px dotted #888}
.rr.k::after{content:"";position:absolute;left:38px;top:0;width:9px;height:8px;border-left:1px dotted #888;border-bottom:1px dotted #888}
.rr.sel{background:#0078d7;color:#fff;outline:1px dotted #fff;outline-offset:-2px}
.tabs.bot{margin-top:3px}
.b1{left:31px}.b2{left:116px}.b3{left:194px}.b4{left:242px}
.tab.b1,.tab.b2,.tab.b3{letter-spacing:-.35px}
.rightcol{width:200px;display:flex;flex-direction:column;margin-right:1px}
.rp1{height:299px;border:2px solid #999;border-top-width:1px;background:#f0f0f0;padding-right:4px;margin-top:-2px}
.rhd{height:26px;display:flex;align-items:center;justify-content:flex-end;background:linear-gradient(#fff,#ececec);border-bottom:1px solid #aaa;margin-right:-4px;padding-right:13px;gap:10px}
.rhd b{font-weight:normal;margin-right:2px}
.rhd svg{width:12px;height:12px}
.rbox{height:246px;margin-top:21px;border:1px solid #aaa;background:#fff}
.rp2{margin-top:8px}
.rp2 .rhd{height:21px;margin:0;gap:7.500px;padding-right:16px}
.rp2 .rhd b{margin-right:0}
.rlist{margin:25px 4px 0 0;height:178px;border:1px solid #bbb;background:#fff;display:flex;justify-content:flex-end}
.rlist .thumb{height:84px}
.status{height:21px;flex:none;border-bottom:1px solid #ccc;padding:3px 21px 0 0}
.status i{float:right;height:17px;border-left:1px solid #aaa}
.taskbar{height:40px;flex:none;background:#000;display:flex;margin-top:auto;color:#fff}
.tb{width:48px;height:40px;display:flex;align-items:center;justify-content:center;border-bottom:2px solid transparent;margin-right:1px}
.run{border-bottom-color:#76b9ed;width:44px;margin-right:5px}
.tb:nth-child(4){margin-left:2px}
.act{background:#333;width:48px;margin-left:-1px}
.tray{margin-left:auto;display:flex;align-items:center;gap:7px;padding-right:25px;font:12px "Open Sans",sans-serif;letter-spacing:-.3px}
.clock{display:flex;flex-direction:column;align-items:center;line-height:17px;width:66px;margin-right:8px;margin-left:5px;font-size:11.8px;margin-top:-1px}
.eng{font-size:12px}
.device{position:absolute;left:506px;top:16px;width:655px;height:660px;background:#ececec;border:1px solid #d4d4d4;border-right:2px solid #777;border-bottom:2px solid #777;padding:3px}
.dframe{height:100%;border:2px solid #dfa468;border-bottom-width:4px;border-right-color:#fcb05c;background:#fff0d8;display:flex;flex-direction:column;padding:0 1px 2px 1px}
.dhead{height:22px;flex:none;margin:0 -1px;background:linear-gradient(#ffcf88,#feae56);display:flex;align-items:center;padding-left:6px}
.dicons{margin-left:auto;display:flex;align-items:center;gap:7.700px;padding-right:13px}
.dicons b{font-weight:normal}
.dicons svg{width:12px;height:12px}
.dbody{flex:1;display:flex;min-height:0}
.dtools{width:25px;flex:none;background:#f0f0f0;display:flex;flex-direction:column;align-items:center}
.dtools b{width:22px;height:22px;flex:none;display:flex;align-items:center;justify-content:center}
.dtools b.on{background:#fcb96f;border:1px solid #a99478}
.dtools svg{width:16px;height:16px}
.dtools i{height:1px;width:14px;margin:2px 0;flex:none;background:#999}
.fabric{flex:none;background:#000}
```
FILE: app.js
```js
const NAV = [
  ["Project Manager", 1, [["gears","Project Settings"],["addsrc","Add Sources"],["bulb","Language Templates"],["ip","IP Catalog"]]],
  ["IP Integrator", 0, [["blocks","Create Block Design"],["openg","Open Block Design","off"],["geng","Generate Block Design","off"]]],
  ["Simulation", 1, [["gears","Simulation Settings"],["sim","Run Simulation"]]],
  ["RTL Analysis", 0, [["gears","Elaboration Settings"],["opend","Open Elaborated Design","exp"]]],
  ["Synthesis", 0, [["gears","Synthesis Settings"],["runs","Run Synthesis"],["opend","Open Synthesized Design","exp"]]],
  ["Implementation", 2, [["gears","Implementation Settings"]]]
];
document.getElementById("flowtree").innerHTML = NAV.map(([name, kind, items]) =>
  `<div class="group"><div class="gh ${kind ? "b" : ""} ${kind === 2 ? "sel" : ""}"><svg width="8" height="8"><path d="M7 1v6H1z" fill="#444" stroke="#222"/></svg>${name}</div>` +
  items.map(([ic, t, f]) => `<div class="it ${f === "off" ? "off" : ""}"><span class="exp">${f === "exp" ? '<svg width="6" height="9"><path d="M.5 1v7l4-3.500z" fill="#fff" stroke="#999"/></svg>' : ""}</span><svg class="ic"><use href="#${ic}"/></svg>${t}</div>`).join("") + "</div>").join("");

const REP = [
  ["k off", "Pre-Placement Clock Report"], ["k", "Vivado Implementation Log", 1], ["k off", "Pre-Placement Incremental R..."],
  ["k", "IO Report", 1], ["k", "Utilization Report", 1], ["k", "Control Sets Report", 1],
  ["k off", "Incremental Reuse Report"], ["k off", "Timing Summary Report"],
  ["st sel", "Post-Place Power Opt Design (post_place_power_opt"], ["k off", "Timing Summary Report"],
  ["st", 'Post-Place Phys Opt Design <span class="g">(phys_opt_design)</span>'], ["k off", "Timing Summary Report"]
];
document.getElementById("rrows").innerHTML = REP.map(([c, t, d]) =>
  `<div class="rr ${c}">${c.startsWith("st") ? '<i class="box"></i>' : ""}<div class="nm">${c[0] === "k" ? `<svg><use href="#${d ? "doc" : "docg"}"/></svg>` : ""}<span>${t}</span></div>${d ? '<span class="dt">6/3/21 12:58 PM</span>' : ""}</div>`).join("");

let s = "";
const R = (x, y, w, h, f) => { s += `<rect x="${x}" y="${y}" width="${w}" height="${h}" fill="${f}"/>`; };
const O = (x, y, w, h, c) => { s += `<rect x="${x + .5}" y="${y + .5}" width="${w}" height="${h}" fill="none" stroke="${c}"/>`; };
s += '<defs><pattern id="clb" width="6" height="6" patternUnits="userSpaceOnUse"><path d="M0 0h6v6H0z" fill="#00001c"/><path d="M0 .5h6M.5 0v6" stroke="#00002a"/></pattern>' +
  '<pattern id="io" width="6" height="9" patternUnits="userSpaceOnUse"><path d="M0 0h6v9H0z" fill="#5c4e30"/><path d="M0 1h1v1H0zM0 4h1v1H0zM3 2h3v2H3zM2 6h1v1H2zM4 6h2v1H4zM0 7h1v1H0z" fill="#080600"/></pattern></defs>';
O(665, 68, 360, 574, "#777");
const BANDS = [72, 261, 450];
BANDS.forEach((y, i) => {
  const h = i === 2 ? 189 : 187;
  R(698, y, 155, h, "url(#clb)");
  R(856, y, i ? 137 : 99, h, "url(#clb)");
  if (i) R(772, y - 2, 48, h + 3, "#000");
});
BANDS.forEach((y, i) => {
  const cols = [[731, "#430914", 5], [753, "#0a3010", 3], [906, "#430914", 5], [936, "#0a3010", 3]];
  if (i) cols.push([956, "#430914", 5]);
  cols.forEach(([x, c, w]) => {
    R(x, y, w, 189, c);
    s += `<path d="M${x + w / 2} ${y}v189" stroke="#080008" stroke-dasharray="7 2"/>`;
  });
});
R(881, 168, 30, 92, "#00001c"); R(881, 168, 28, 20, "#000"); R(883, 188, 22, 72, "#000"); O(883, 188, 21, 72, "#45176a");
BANDS.forEach((y, i) => {
  R(698, y + 93, 155, 4, "#000"); R(856, y + 93, 137, 4, "#000");
  const sides = [[686, 691, 680]]; if (i) sides.push([1001, 993, 1007]);
  sides.forEach(([a, b, c]) => {
    R(c, y, 6, 188, "url(#io)");
    [[4, 22], [26, 44], [71, 21], [97, 21], [119, 23], [142, 22], [164, 22]].forEach(([o, h]) => O(a, y + o, 5, h, "#a87834"));
    [[0, 48], [48, 9], [57, 8], [65, 8], [74, 8], [83, 6], [89, 3], [97, 8], [105, 8], [113, 8], [122, 8], [130, 57]].forEach(([o, h]) => O(b, y + o, 6, h, "#a87834"));
    R(Math.min(a, c) - 2, y + 93, 8, 4, "#70450f"); R(b, y + 93, 6, 4, "#70450f");
  });
  R(853, y + 79, 5, 29, ["#6e4c12", "#5e3c28", "#803038"][i]);
  s += `<path d="M855.500 ${y + 81}v26" stroke="#b07a20" stroke-dasharray="2 2"/>`;
});
["#944b86", "#8ff02a", "#1414b0"].forEach((c, i) => R(671, BANDS[i], 6, 189, c));
R(670, 165, 8, 4, "#000"); R(670, 354, 8, 3, "#000");
[[112, 7], [152, 11], [171, 7], [527, 7], [538, 7], [546, 14], [571, 11], [586, 7]].forEach(([y, h]) => R(670, y, 7, h, "#fff"));
R(1014, 262, 7, 187, "#568716"); R(1014, 451, 7, 188, "#168294");
[[309, 32], [517, 6], [527, 18], [568, 10], [590, 8]].forEach(([y, h]) => R(1014, y, 7, h, "#fff"));
R(1014, 354, 7, 3, "#000"); R(1014, 530, 7, 2, "#168294");
R(955, 73, 13, 185, "#000010"); R(961, 73, 3, 187, "#686868");
[[83, 20], [123, 21], [163, 18], [190, 20], [231, 20]].forEach(([y, h]) => R(965, y, 3, h, "#c87fb2"));
[112, 179, 219].forEach(y => R(961, y, 4, 1, "#000"));
R(965, 154, 3, 8, "#6a624a");
[[669, 72, 183, 186, "#c897a8"], [855, 72, 113, 186, "#58a898"], [669, 261, 183, 186, "#c0cb6a"], [855, 261, 166, 186, "#3820a0"], [669, 450, 183, 189, "#6c80c4"], [855, 450, 166, 189, "#ac1c68"]].forEach(a => O(...a));
R(854, 464, 3, 2, "#6fe0e0");
O(813, 318, 6, 28, "#aaa"); R(814, 347, 6, 8, "#e018d0");
O(813, 456, 6, 10, "#aaa"); O(813, 472, 6, 9, "#aaa");
[[495, 3], [500, 4], [506, 4], [512, 4], [518, 4], [524, 4], [530, 3], [543, 3], [548, 4], [554, 4], [560, 4]].forEach(([y, h]) => O(813, y, 6, h, "#aaa"));
[[698, 531, 2, 3], [698, 568, 2, 3], [698, 572, 4, 6], [698, 578, 3, 4], [698, 583, 5, 16], [698, 599, 4, 5], [698, 604, 2, 4], [706, 583, 4, 7], [706, 590, 3, 4], [706, 595, 2, 5], [706, 602, 3, 5], [714, 587, 2, 3], [714, 591, 2, 2], [714, 594, 3, 3], [714, 599, 2, 1], [714, 602, 3, 3], [714, 613, 2, 2], [722, 591, 3, 10], [722, 602, 3, 14]].forEach(a => R(...a, "#fff"));
[[684, 255, "X0Y2", "#c897a8"], [862, 255, "X1Y2", "#58a898"], [677, 444, "X0Y1", "#b4bc70"], [862, 444, "X1Y1", "#3828b0"], [684, 635, "X0Y0", "#6c80c4"], [862, 635, "X1Y0", "#b01c68"]].forEach(([x, y, t, c]) => {
  s += `<text x="${x}" y="${y}" fill="${c}" font-family="Liberation Mono, monospace" font-size="12">${t}</text>`;
});
const f = document.getElementById("fabric");
f.setAttribute("shape-rendering", "crispEdges");
f.innerHTML = s;
```
